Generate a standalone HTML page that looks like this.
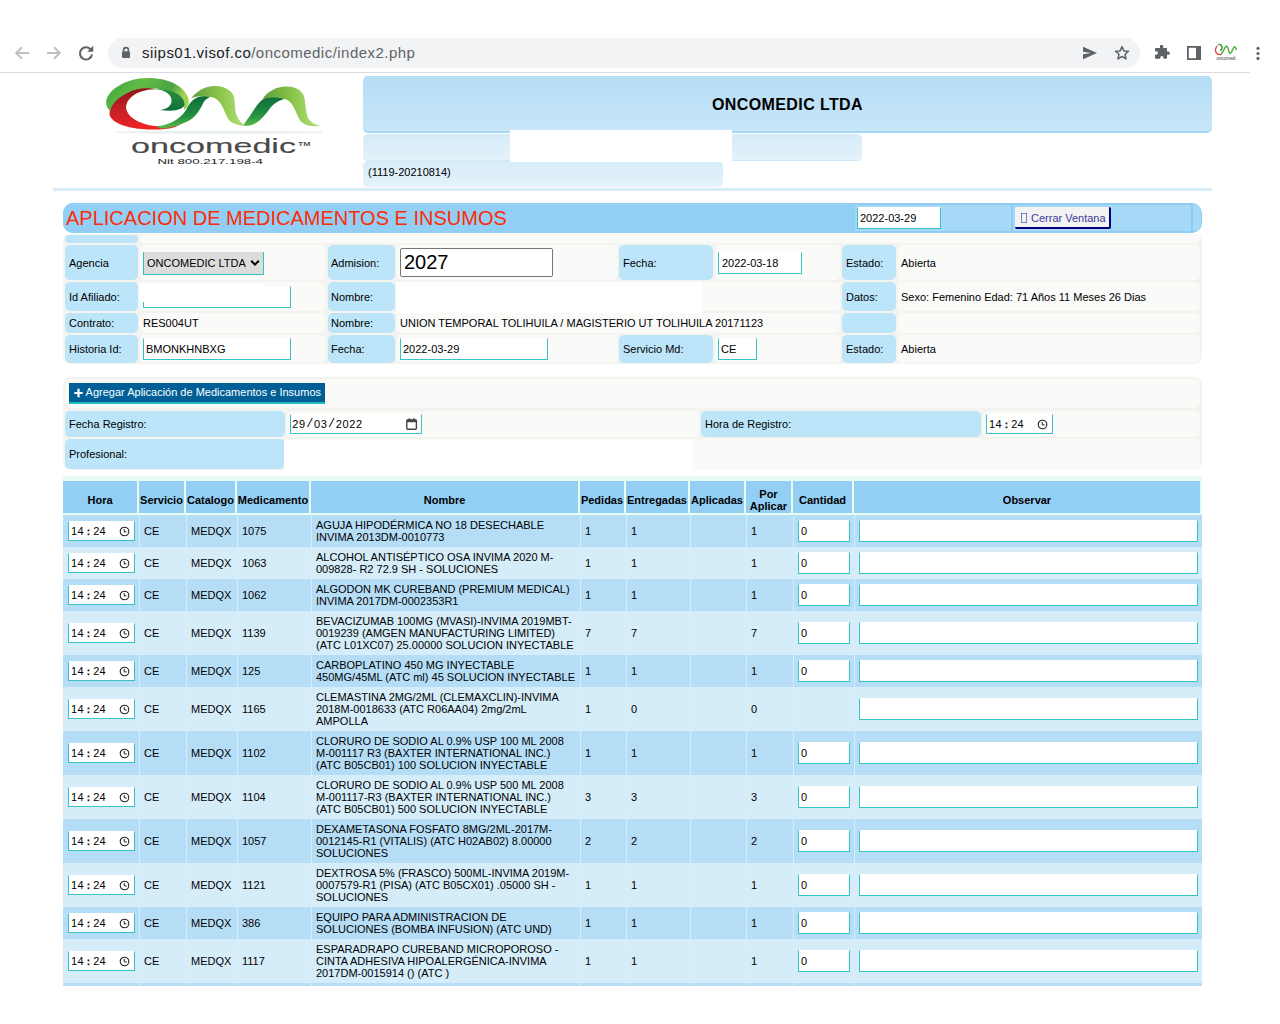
<!DOCTYPE html><html><head><meta charset="utf-8"><style>
html,body{margin:0;padding:0;background:#fff;width:1280px;height:1024px;overflow:hidden;}
body{position:relative;font-family:"Liberation Sans", sans-serif;font-size:11px;color:#000;}
.lbl{position:absolute;background:#bde5f9;border-radius:5px;}
.val{position:absolute;background:#fafaf8;border-radius:5px;}
.t11{position:absolute;font-size:11px;line-height:12px;white-space:nowrap;}
.inp{position:absolute;background:#fff;box-sizing:border-box;border:1px solid #35c3c3;border-top-color:#fff;}
.hc{position:absolute;background:#93cff5;font-weight:bold;font-size:11px;line-height:12px;display:flex;align-items:center;justify-content:center;text-align:center;box-sizing:border-box;padding-top:6px;}
.bc{position:absolute;font-size:11px;line-height:12px;display:flex;align-items:center;box-sizing:border-box;padding-left:4px;}
</style></head><body>
<div style="position:absolute;left:0px;top:72px;width:1250px;height:1px;background:#dadce0;"></div>
<div style="position:absolute;left:108px;top:38px;width:1032px;height:30px;background:#f1f3f4;border-radius:15px;"></div>
<svg style="position:absolute;left:13px;top:44px" width="18" height="18" viewBox="0 0 18 18"><path d="M16 9H3.5M9 3.2L3.2 9L9 14.8" fill="none" stroke="#bdc1c6" stroke-width="2"/></svg>
<svg style="position:absolute;left:45px;top:44px" width="18" height="18" viewBox="0 0 18 18"><path d="M2 9h12.5M9 3.2L14.8 9L9 14.8" fill="none" stroke="#bdc1c6" stroke-width="2"/></svg>
<svg style="position:absolute;left:77px;top:44px" width="18" height="18" viewBox="0 0 18 18"><path d="M14.2 6.2A6.1 6.1 0 1 0 15 10.5" fill="none" stroke="#5f6368" stroke-width="2"/><path d="M16.2 1.8V7.8H10.2Z" fill="#5f6368"/></svg>
<svg style="position:absolute;left:121px;top:46px" width="10" height="13" viewBox="0 0 10 13"><path d="M2.6 5.5V4A2.4 2.4 0 0 1 7.4 4V5.5" fill="none" stroke="#5f6368" stroke-width="1.6"/><rect x="1" y="5.3" width="8" height="6.6" rx="0.8" fill="#5f6368"/></svg>
<div style="position:absolute;left:142px;top:44px;white-space:nowrap;font-size:15px;line-height:18px;letter-spacing:0.47px;"><span style="color:#202124">siips01.visof.co</span><span style="color:#5f6368">/oncomedic/index2.php</span></div>
<svg style="position:absolute;left:1082px;top:46px" width="16" height="14" viewBox="0 0 16 14"><path d="M1 0.8L15 7L1 13.2L1 8.3L9 7L1 5.7Z" fill="#5f6368"/></svg>
<svg style="position:absolute;left:1114px;top:45px" width="16" height="16" viewBox="0 0 16 16"><path d="M8 1.6L9.9 5.9L14.5 6.3L11 9.3L12.1 13.9L8 11.5L3.9 13.9L5 9.3L1.5 6.3L6.1 5.9Z" fill="none" stroke="#5f6368" stroke-width="1.5" stroke-linejoin="round"/></svg>
<svg style="position:absolute;left:1154px;top:45px" width="16" height="16" viewBox="0 0 16 16"><path d="M6 1.2a1.6 1.6 0 0 1 3.2 0V3H12.5a.5 .5 0 0 1 .5.5V6.6h1.3a1.6 1.6 0 0 1 0 3.2H13V13a.8.8 0 0 1-.8.8H9.5V12.6a1.6 1.6 0 0 0-3.2 0v1.2H1.8A.8.8 0 0 1 1 13V9.7h1.2a1.7 1.7 0 0 0 0-3.4H1V3.5A.5.5 0 0 1 1.5 3H6Z" fill="#5f6368"/></svg>
<svg style="position:absolute;left:1187px;top:46px" width="14" height="14" viewBox="0 0 14 14"><rect x="0.9" y="0.9" width="12.2" height="12.2" fill="none" stroke="#5f6368" stroke-width="1.8"/><rect x="9" y="0.9" width="4.1" height="12.2" fill="#5f6368"/></svg>
<svg style="position:absolute;left:1214px;top:43px" width="24" height="19" viewBox="0 0 24 19"><path d="M3.5 2.8C1.5 4 1 8 2 9.5C3.5 11.5 6 11.8 7.5 11.3" fill="none" stroke="#e02828" stroke-width="1.3" opacity="0.9"/><path d="M4.2 1.6C6 1 8 2 8 4.5C8 6.5 7 7.3 6.2 7.3" fill="none" stroke="#2a9a35" stroke-width="1.4"/><path d="M7 11.2C9.5 10 10.5 3.5 12.5 3.2C14.5 3 14.5 10.5 16 10.5C18 10.5 19 4 20.5 3.8C21.5 3.8 22 5.5 22.5 7" fill="none" stroke="#4aa838" stroke-width="1.4"/><text x="12" y="17.3" font-size="4.6" text-anchor="middle" fill="#333" font-family="Liberation Sans" textLength="19" lengthAdjust="spacingAndGlyphs">oncomedi</text></svg>
<svg style="position:absolute;left:1255px;top:45px" width="6" height="16" viewBox="0 0 6 16"><circle cx="3" cy="3.3" r="1.6" fill="#5f6368"/><circle cx="3" cy="8.5" r="1.6" fill="#5f6368"/><circle cx="3" cy="13.4" r="1.6" fill="#5f6368"/></svg>
<svg style="position:absolute;left:100px;top:74px" width="230" height="95" viewBox="0 0 230 95">
<defs>
<linearGradient id="gred" x1="0" y1="0" x2="0.3" y2="1"><stop offset="0" stop-color="#7e1418"/><stop offset="0.5" stop-color="#c42026"/><stop offset="1" stop-color="#f02222"/></linearGradient>
<linearGradient id="gtop" x1="0" y1="0" x2="1" y2="0.3"><stop offset="0" stop-color="#3fa53c"/><stop offset="0.45" stop-color="#62bb46"/><stop offset="0.8" stop-color="#4aa443"/><stop offset="1" stop-color="#a2d152"/></linearGradient>
<linearGradient id="gcurl" x1="0" y1="0" x2="0" y2="1"><stop offset="0" stop-color="#2c9040"/><stop offset="1" stop-color="#0f6f3a"/></linearGradient>
<linearGradient id="gdark" x1="0" y1="0" x2="0" y2="1"><stop offset="0" stop-color="#0d6b38"/><stop offset="0.6" stop-color="#218f40"/><stop offset="1" stop-color="#5ab947"/></linearGradient>
<linearGradient id="glight" x1="0" y1="0" x2="1" y2="0"><stop offset="0" stop-color="#5e9f3c"/><stop offset="0.55" stop-color="#8cc84a"/><stop offset="1" stop-color="#bde08a"/></linearGradient>
<linearGradient id="gline" x1="0" y1="0" x2="1" y2="0"><stop offset="0" stop-color="#f4f4f4"/><stop offset="0.3" stop-color="#e6eef0"/><stop offset="0.7" stop-color="#e8eef0"/><stop offset="1" stop-color="#f4f4f4"/></linearGradient>
</defs>
<path d="M10,37 C6,47 26,56 55,55.5 C66,55.5 74,54 80,51 C72,52.5 66,53 60,52.5 C44,51.5 30,46 26.5,36 C24,26 36,15.5 55,15.2 C52,14 44,13.5 40,14 C24,17 12,26 10,37 Z" fill="url(#gred)"/>
<path d="M6.3,30 C5,17 25,4 48,4 C70,4 86,13 88.7,26 C89,31 87,34 84,36 C85,27 77,17 58,14.8 C50,14 42,13.6 36,15.5 C22,20 12,28 10,37 C8,35 6.5,32 6.3,30 Z" fill="url(#gtop)"/>
<path d="M52,15 C72,14 84,21 84.5,30 C84.5,35 76,38 60,36 C68,35 72,31 71.5,26 C71,20 65,15.5 52,15 Z" fill="url(#gcurl)"/>
<path d="M57,52.5 C68,51 80,46 86,36 C89,30 92,25 100,22.5 C104,21.5 108,22 110,23 C106,25 104,27 103,29.5 C100,36 96,42 90,46 C82,51 70,54 60,54.5 Z" fill="url(#gdark)"/>
<path d="M91,24.4 C96,18 104,12 115,12 C126,12 134,18 134.4,25 C135,31 135,38 137.5,43 C139.5,47.5 142,50 147.5,51.5 L144.4,51.9 C138,51.5 132,49.5 129,46 C126,42 124.5,36 121,30 C118,25.5 114,23 110,23 C103,22 97,22 91,24.4 Z" fill="url(#glight)"/>
<path d="M143.75,50.5 C148,45 153,37 158,30 C163,24 168,22 175,22.5 C179,22.8 182,23.5 184.4,25 C180,26 176,28 171,33 C166,40 161,46 156,49 C153,51 149,51.8 145,51.8 Z" fill="url(#gdark)"/>
<path d="M162.5,25 C167,18 176,12.5 186.25,12.5 C196,12.5 203,17 204.4,23.75 C205.5,29 205.5,37 208,43.75 C210,48 214,50.5 221.5,51.9 C214,52.8 208,52.2 204.4,50 C200,47.5 198.5,44 196,38 C193,31 190,26 184.4,25 C179,23 170,23 162.5,25 Z" fill="url(#glight)"/>
<rect x="15" y="57" width="207" height="2.5" fill="url(#gline)"/>
<text x="31" y="79.4" font-family="Liberation Sans" font-size="20.5" fill="#4a4a4a" stroke="#4a4a4a" stroke-width="0.15" textLength="165" lengthAdjust="spacingAndGlyphs">oncomedic</text>
<text x="198" y="71.8" font-family="Liberation Sans" font-size="5.5" font-weight="bold" fill="#555" textLength="12.5" lengthAdjust="spacingAndGlyphs">TM</text>
<text x="57.5" y="90" font-family="Liberation Sans" font-size="7.6" fill="#1a1a1a" textLength="105.5" lengthAdjust="spacingAndGlyphs">Nit 800.217.198-4</text>
</svg>
<div style="position:absolute;left:363px;top:76px;width:849px;height:57px;background:linear-gradient(#b5ddf6,#c8e6f8);border-radius:5px;border-bottom:2px solid #a9d6f4;box-sizing:border-box;"></div>
<div style="position:absolute;left:363px;top:96px;white-space:nowrap;font-size:16px;line-height:18px;font-weight:bold;letter-spacing:0.4px;"><span style="display:block;width:849px;text-align:center">ONCOMEDIC LTDA</span></div>
<div style="position:absolute;left:363px;top:134px;width:499px;height:27px;background:linear-gradient(#d5ebf8,#e4f2fa);border-radius:5px;border-bottom:1px solid #cfe8f7;box-sizing:border-box;"></div>
<div style="position:absolute;left:363px;top:161px;width:360px;height:26px;background:linear-gradient(#d6ecf8,#e5f2fa);border-radius:5px;"></div>
<div style="position:absolute;left:368px;top:166px;white-space:nowrap;font-size:11px;line-height:12px;">(1119-20210814)</div>
<div style="position:absolute;left:510px;top:130px;width:222px;height:32px;background:#fff;"></div>
<div style="position:absolute;left:53px;top:188px;width:1159px;height:3px;background:#d6ecf8;"></div>
<div style="position:absolute;left:63px;top:203px;width:1139px;height:30px;background:#8fccf4;border-radius:10px;"></div>
<div style="position:absolute;left:63px;top:203px;width:792px;height:30px;background:#93cff5;border-radius:10px 0 0 10px;"></div>
<div style="position:absolute;left:855px;top:205px;width:156px;height:26px;background:#a6d9f8;"></div>
<div style="position:absolute;left:1013px;top:205px;width:178px;height:26px;background:#a6d9f8;"></div>
<div style="position:absolute;left:1193px;top:205px;width:8px;height:26px;background:#a6d9f8;border-radius:0 6px 6px 0;"></div>
<div style="position:absolute;left:66px;top:207px;white-space:nowrap;font-size:20px;line-height:23px;color:#fd2c05;">APLICACION DE MEDICAMENTOS E INSUMOS</div>
<div style="position:absolute;left:857px;top:207px;width:84px;height:22px;background:#fff;box-sizing:border-box;border:1px solid #35c3c3;border-top-color:#fff;"></div>
<div style="position:absolute;left:860px;top:212px;white-space:nowrap;font-size:11px;line-height:12px;">2022-03-29</div>
<div style="position:absolute;left:1015px;top:207px;width:96px;height:22px;background:#f3f3f3;box-sizing:border-box;border-right:2px solid #00007a;border-bottom:2px solid #00007a;border-radius:2px;"></div>
<div style="position:absolute;left:1021px;top:212px;white-space:nowrap;font-size:11px;line-height:12px;color:#3b3b9a;"><span style="display:inline-block;width:4px;height:8px;border:1px solid #8080c0;margin-right:4px;vertical-align:-1px"></span>Cerrar Ventana</div>
<div style="position:absolute;left:63px;top:234px;width:1139px;height:130px;background:#f3f3ef;border-radius:8px;"></div>
<div style="position:absolute;left:65px;top:235px;width:73px;height:8px;background:#bde5f9;border-radius:4px;"></div>
<div style="position:absolute;left:140px;top:235px;width:1060px;height:8px;background:#fafaf8;border-radius:4px;"></div>
<div style="position:absolute;left:65px;top:245px;width:73px;height:35px;background:#bde5f9;border-radius:5px;"></div>
<div style="position:absolute;left:328px;top:245px;width:67px;height:35px;background:#bde5f9;border-radius:5px;"></div>
<div style="position:absolute;left:619px;top:245px;width:94px;height:35px;background:#bde5f9;border-radius:5px;"></div>
<div style="position:absolute;left:842px;top:245px;width:54px;height:35px;background:#bde5f9;border-radius:5px;"></div>
<div style="position:absolute;left:140px;top:245px;width:185px;height:35px;background:#fafaf8;border-radius:5px;"></div>
<div style="position:absolute;left:397px;top:245px;width:220px;height:35px;background:#fafaf8;border-radius:5px;"></div>
<div style="position:absolute;left:715px;top:245px;width:125px;height:35px;background:#fafaf8;border-radius:5px;"></div>
<div style="position:absolute;left:898px;top:245px;width:302px;height:35px;background:#fafaf8;border-radius:5px;"></div>
<div style="position:absolute;left:65px;top:282px;width:73px;height:29px;background:#bde5f9;border-radius:5px;"></div>
<div style="position:absolute;left:328px;top:282px;width:67px;height:29px;background:#bde5f9;border-radius:5px;"></div>
<div style="position:absolute;left:619px;top:282px;width:94px;height:29px;background:#bde5f9;border-radius:5px;"></div>
<div style="position:absolute;left:842px;top:282px;width:54px;height:29px;background:#bde5f9;border-radius:5px;"></div>
<div style="position:absolute;left:140px;top:282px;width:185px;height:29px;background:#fafaf8;border-radius:5px;"></div>
<div style="position:absolute;left:397px;top:282px;width:220px;height:29px;background:#fafaf8;border-radius:5px;"></div>
<div style="position:absolute;left:715px;top:282px;width:125px;height:29px;background:#fafaf8;border-radius:5px;"></div>
<div style="position:absolute;left:898px;top:282px;width:302px;height:29px;background:#fafaf8;border-radius:5px;"></div>
<div style="position:absolute;left:65px;top:313px;width:73px;height:20px;background:#bde5f9;border-radius:5px;"></div>
<div style="position:absolute;left:328px;top:313px;width:67px;height:20px;background:#bde5f9;border-radius:5px;"></div>
<div style="position:absolute;left:619px;top:313px;width:94px;height:20px;background:#bde5f9;border-radius:5px;"></div>
<div style="position:absolute;left:842px;top:313px;width:54px;height:20px;background:#bde5f9;border-radius:5px;"></div>
<div style="position:absolute;left:140px;top:313px;width:185px;height:20px;background:#fafaf8;border-radius:5px;"></div>
<div style="position:absolute;left:397px;top:313px;width:220px;height:20px;background:#fafaf8;border-radius:5px;"></div>
<div style="position:absolute;left:715px;top:313px;width:125px;height:20px;background:#fafaf8;border-radius:5px;"></div>
<div style="position:absolute;left:898px;top:313px;width:302px;height:20px;background:#fafaf8;border-radius:5px;"></div>
<div style="position:absolute;left:65px;top:335px;width:73px;height:28px;background:#bde5f9;border-radius:5px;"></div>
<div style="position:absolute;left:328px;top:335px;width:67px;height:28px;background:#bde5f9;border-radius:5px;"></div>
<div style="position:absolute;left:619px;top:335px;width:94px;height:28px;background:#bde5f9;border-radius:5px;"></div>
<div style="position:absolute;left:842px;top:335px;width:54px;height:28px;background:#bde5f9;border-radius:5px;"></div>
<div style="position:absolute;left:140px;top:335px;width:185px;height:28px;background:#fafaf8;border-radius:5px;"></div>
<div style="position:absolute;left:397px;top:335px;width:220px;height:28px;background:#fafaf8;border-radius:5px;"></div>
<div style="position:absolute;left:715px;top:335px;width:125px;height:28px;background:#fafaf8;border-radius:5px;"></div>
<div style="position:absolute;left:898px;top:335px;width:302px;height:28px;background:#fafaf8;border-radius:5px;"></div>
<div style="position:absolute;left:397px;top:282px;width:443px;height:29px;background:#fafaf8;border-radius:5px;"></div>
<div style="position:absolute;left:397px;top:313px;width:443px;height:20px;background:#fafaf8;border-radius:5px;"></div>
<div style="position:absolute;left:69px;top:257px;white-space:nowrap;font-size:11px;line-height:12px;">Agencia</div>
<div style="position:absolute;left:331px;top:257px;white-space:nowrap;font-size:11px;line-height:12px;">Admision:</div>
<div style="position:absolute;left:623px;top:257px;white-space:nowrap;font-size:11px;line-height:12px;">Fecha:</div>
<div style="position:absolute;left:846px;top:257px;white-space:nowrap;font-size:11px;line-height:12px;">Estado:</div>
<div style="position:absolute;left:69px;top:291px;white-space:nowrap;font-size:11px;line-height:12px;">Id Afiliado:</div>
<div style="position:absolute;left:331px;top:291px;white-space:nowrap;font-size:11px;line-height:12px;">Nombre:</div>
<div style="position:absolute;left:846px;top:291px;white-space:nowrap;font-size:11px;line-height:12px;">Datos:</div>
<div style="position:absolute;left:69px;top:317px;white-space:nowrap;font-size:11px;line-height:12px;">Contrato:</div>
<div style="position:absolute;left:331px;top:317px;white-space:nowrap;font-size:11px;line-height:12px;">Nombre:</div>
<div style="position:absolute;left:69px;top:343px;white-space:nowrap;font-size:11px;line-height:12px;">Historia Id:</div>
<div style="position:absolute;left:331px;top:343px;white-space:nowrap;font-size:11px;line-height:12px;">Fecha:</div>
<div style="position:absolute;left:623px;top:343px;white-space:nowrap;font-size:11px;line-height:12px;">Servicio Md:</div>
<div style="position:absolute;left:846px;top:343px;white-space:nowrap;font-size:11px;line-height:12px;">Estado:</div>
<div style="position:absolute;left:143px;top:252px;width:121px;height:23px;background:#dcdcdc;box-sizing:border-box;border:1px solid #35c3c3;border-top:none;"></div>
<div style="position:absolute;left:147px;top:257px;white-space:nowrap;font-size:11px;line-height:12px;">ONCOMEDIC LTDA</div>
<svg style="position:absolute;left:250px;top:259px" width="10" height="8" viewBox="0 0 10 8"><path d="M1.2 1.8L5 5.6L8.8 1.8" fill="none" stroke="#000" stroke-width="2"/></svg>
<div style="position:absolute;left:400px;top:248px;width:153px;height:29px;background:#fff;box-sizing:border-box;border:1px solid #767676;border-radius:2px;"></div>
<div style="position:absolute;left:404px;top:251px;white-space:nowrap;font-size:20px;line-height:23px;">2027</div>
<div style="position:absolute;left:718px;top:252px;width:84px;height:22px;background:#fff;box-sizing:border-box;border:1px solid #35c3c3;border-top-color:#fff;"></div>
<div style="position:absolute;left:722px;top:257px;white-space:nowrap;font-size:11px;line-height:12px;">2022-03-18</div>
<div style="position:absolute;left:901px;top:257px;white-space:nowrap;font-size:11px;line-height:12px;">Abierta</div>
<div style="position:absolute;left:143px;top:286px;width:148px;height:22px;background:#fff;box-sizing:border-box;border:1px solid #35c3c3;border-top-color:#fff;"></div>
<div style="position:absolute;left:139px;top:283px;width:123px;height:19px;background:#fff;"></div>
<div style="position:absolute;left:901px;top:291px;white-space:nowrap;font-size:11px;line-height:12px;">Sexo: Femenino Edad: 71 Años 11 Meses 26 Dias</div>
<div style="position:absolute;left:143px;top:317px;white-space:nowrap;font-size:11px;line-height:12px;">RES004UT</div>
<div style="position:absolute;left:400px;top:317px;white-space:nowrap;font-size:11px;line-height:12px;">UNION TEMPORAL TOLIHUILA / MAGISTERIO UT TOLIHUILA 20171123</div>
<div style="position:absolute;left:143px;top:338px;width:148px;height:22px;background:#fff;box-sizing:border-box;border:1px solid #35c3c3;border-top-color:#fff;"></div>
<div style="position:absolute;left:146px;top:343px;white-space:nowrap;font-size:11px;line-height:12px;">BMONKHNBXG</div>
<div style="position:absolute;left:400px;top:338px;width:148px;height:22px;background:#fff;box-sizing:border-box;border:1px solid #35c3c3;border-top-color:#fff;"></div>
<div style="position:absolute;left:403px;top:343px;white-space:nowrap;font-size:11px;line-height:12px;">2022-03-29</div>
<div style="position:absolute;left:718px;top:338px;width:39px;height:22px;background:#fff;box-sizing:border-box;border:1px solid #35c3c3;border-top-color:#fff;"></div>
<div style="position:absolute;left:721px;top:343px;white-space:nowrap;font-size:11px;line-height:12px;">CE</div>
<div style="position:absolute;left:901px;top:343px;white-space:nowrap;font-size:11px;line-height:12px;">Abierta</div>
<div style="position:absolute;left:396px;top:282px;width:306px;height:31px;background:#fff;"></div>
<div style="position:absolute;left:63px;top:377px;width:1139px;height:93px;background:#f3f3ef;border-radius:8px;"></div>
<div style="position:absolute;left:65px;top:379px;width:1135px;height:29px;background:#fafaf8;border-radius:8px;"></div>
<div style="position:absolute;left:69px;top:383px;width:256px;height:21px;background:#005f96;box-sizing:border-box;border-bottom:2px solid #22bcbc;"></div>
<svg style="position:absolute;left:73.5px;top:388px" width="9" height="10" viewBox="0 0 9 10"><path d="M4.5 0.8V9.2M0.3 5H8.7" stroke="#fff" stroke-width="2.2"/></svg>
<div style="position:absolute;left:85.6px;top:386px;white-space:nowrap;font-size:11px;line-height:12px;color:#fff;">Agregar Aplicación de Medicamentos e Insumos</div>
<div style="position:absolute;left:65px;top:411px;width:220px;height:26px;background:#bde5f9;border-radius:5px;"></div>
<div style="position:absolute;left:287px;top:411px;width:412px;height:26px;background:#fafaf8;border-radius:5px;"></div>
<div style="position:absolute;left:701px;top:411px;width:280px;height:26px;background:#bde5f9;border-radius:5px;"></div>
<div style="position:absolute;left:983px;top:411px;width:217px;height:26px;background:#fafaf8;border-radius:5px;"></div>
<div style="position:absolute;left:65px;top:439px;width:220px;height:30px;background:#bde5f9;border-radius:5px;"></div>
<div style="position:absolute;left:287px;top:439px;width:913px;height:31px;background:#fafaf8;border-radius:5px;"></div>
<div style="position:absolute;left:69px;top:418px;white-space:nowrap;font-size:11px;line-height:12px;">Fecha Registro:</div>
<div style="position:absolute;left:69px;top:448px;white-space:nowrap;font-size:11px;line-height:12px;">Profesional:</div>
<div style="position:absolute;left:705px;top:418px;white-space:nowrap;font-size:11px;line-height:12px;">Hora de Registro:</div>
<div style="position:absolute;left:290px;top:414px;width:132px;height:20px;background:#fff;box-sizing:border-box;border:1px solid #35c3c3;border-top-color:#fff;"></div>
<div style="position:absolute;left:292.2px;top:418px;white-space:nowrap;font-size:11px;line-height:12px;letter-spacing:0.6px;">29</div>
<div style="position:absolute;left:314.0px;top:418px;white-space:nowrap;font-size:11px;line-height:12px;letter-spacing:0.6px;">03</div>
<div style="position:absolute;left:335.8px;top:418px;white-space:nowrap;font-size:11px;line-height:12px;letter-spacing:0.6px;">2022</div>
<div style="position:absolute;left:306.2px;top:418px;white-space:nowrap;font-family:'Liberation Mono', monospace;font-size:12px;line-height:12px;">/</div>
<div style="position:absolute;left:328.0px;top:418px;white-space:nowrap;font-family:'Liberation Mono', monospace;font-size:12px;line-height:12px;">/</div>
<svg style="position:absolute;left:405px;top:417px" width="13" height="14" viewBox="0 0 13 14"><rect x="1.8" y="3" width="9.6" height="9.2" rx="1" fill="none" stroke="#444" stroke-width="1.4"/><rect x="1.8" y="2.6" width="9.6" height="2.6" fill="#444"/><rect x="3.6" y="1.2" width="1.4" height="2" fill="#444"/><rect x="8.2" y="1.2" width="1.4" height="2" fill="#444"/></svg>
<div style="position:absolute;left:986px;top:414px;width:67px;height:20px;background:#fff;box-sizing:border-box;border:1px solid #35c3c3;border-top-color:#fff;"></div>
<div style="position:absolute;left:284px;top:440px;width:408px;height:31px;background:#fff;"></div>
<div style="position:absolute;left:986px;top:414px;width:67px;height:20px;background:#fff;box-sizing:border-box;border:1px solid #35c3c3;border-top-color:#fff;"></div>
<div style="position:absolute;left:989.0px;top:418px;white-space:nowrap;font-size:11px;line-height:12px;">1</div>
<div style="position:absolute;left:995.6px;top:418px;white-space:nowrap;font-size:11px;line-height:12px;">4</div>
<div style="position:absolute;left:1011.3px;top:418px;white-space:nowrap;font-size:11px;line-height:12px;">2</div>
<div style="position:absolute;left:1017.5px;top:418px;white-space:nowrap;font-size:11px;line-height:12px;">4</div>
<svg style="position:absolute;left:1005px;top:422px" width="3" height="8" viewBox="0 0 3 8"><rect x="0.6" y="0.5" width="1.8" height="1.8" fill="#222"/><rect x="0.6" y="4.4" width="1.8" height="1.8" fill="#222"/></svg>
<svg style="position:absolute;left:1037px;top:419px" width="11" height="11" viewBox="0 0 11 11"><circle cx="5.5" cy="5.5" r="4.3" fill="none" stroke="#222" stroke-width="1.1"/><path d="M5.2 3V5.9H7.6" fill="none" stroke="#222" stroke-width="1"/></svg>
<div style="position:absolute;left:63px;top:476px;width:1139px;height:510px;background:#e6fcf1;"></div>
<div class="hc" style="left:63px;top:481px;width:74px;height:32px;">Hora</div>
<div class="hc" style="left:139px;top:481px;width:45px;height:32px;">Servicio</div>
<div class="hc" style="left:186px;top:481px;width:49px;height:32px;">Catalogo</div>
<div class="hc" style="left:237px;top:481px;width:72px;height:32px;">Medicamento</div>
<div class="hc" style="left:311px;top:481px;width:267px;height:32px;">Nombre</div>
<div class="hc" style="left:580px;top:481px;width:44px;height:32px;">Pedidas</div>
<div class="hc" style="left:626px;top:481px;width:62px;height:32px;">Entregadas</div>
<div class="hc" style="left:690px;top:481px;width:54px;height:32px;">Aplicadas</div>
<div class="hc" style="left:746px;top:481px;width:45px;height:32px;">Por<br>Aplicar</div>
<div class="hc" style="left:793px;top:481px;width:59px;height:32px;">Cantidad</div>
<div class="hc" style="left:854px;top:481px;width:346px;height:32px;">Observar</div>
<div style="position:absolute;left:63px;top:515px;width:1139px;height:32px;background:#b6ddf6;"></div>
<div style="position:absolute;left:139px;top:515px;width:1px;height:32px;background:#d7eefa;"></div>
<div style="position:absolute;left:186px;top:515px;width:1px;height:32px;background:#d7eefa;"></div>
<div style="position:absolute;left:237px;top:515px;width:1px;height:32px;background:#d7eefa;"></div>
<div style="position:absolute;left:311px;top:515px;width:1px;height:32px;background:#d7eefa;"></div>
<div style="position:absolute;left:580px;top:515px;width:1px;height:32px;background:#d7eefa;"></div>
<div style="position:absolute;left:626px;top:515px;width:1px;height:32px;background:#d7eefa;"></div>
<div style="position:absolute;left:690px;top:515px;width:1px;height:32px;background:#d7eefa;"></div>
<div style="position:absolute;left:746px;top:515px;width:1px;height:32px;background:#d7eefa;"></div>
<div style="position:absolute;left:793px;top:515px;width:1px;height:32px;background:#d7eefa;"></div>
<div style="position:absolute;left:854px;top:515px;width:1px;height:32px;background:#d7eefa;"></div>
<div class="bc" style="left:140px;top:515px;width:46px;height:32px;">CE</div>
<div class="bc" style="left:187px;top:515px;width:50px;height:32px;">MEDQX</div>
<div class="bc" style="left:238px;top:515px;width:73px;height:32px;">1075</div>
<div class="bc" style="left:312px;top:515px;width:268px;height:32px;">AGUJA HIPODÉRMICA NO 18 DESECHABLE<br>INVIMA 2013DM-0010773</div>
<div class="bc" style="left:581px;top:515px;width:45px;height:32px;">1</div>
<div class="bc" style="left:627px;top:515px;width:63px;height:32px;">1</div>
<div class="bc" style="left:747px;top:515px;width:46px;height:32px;">1</div>
<div style="position:absolute;left:68px;top:521px;width:67px;height:20px;background:#fff;box-sizing:border-box;border:1px solid #35c3c3;border-top-color:#fff;"></div>
<div style="position:absolute;left:71.0px;top:525px;white-space:nowrap;font-size:11px;line-height:12px;">1</div>
<div style="position:absolute;left:77.6px;top:525px;white-space:nowrap;font-size:11px;line-height:12px;">4</div>
<div style="position:absolute;left:93.3px;top:525px;white-space:nowrap;font-size:11px;line-height:12px;">2</div>
<div style="position:absolute;left:99.5px;top:525px;white-space:nowrap;font-size:11px;line-height:12px;">4</div>
<svg style="position:absolute;left:87px;top:529px" width="3" height="8" viewBox="0 0 3 8"><rect x="0.6" y="0.5" width="1.8" height="1.8" fill="#222"/><rect x="0.6" y="4.4" width="1.8" height="1.8" fill="#222"/></svg>
<svg style="position:absolute;left:119px;top:526px" width="11" height="11" viewBox="0 0 11 11"><circle cx="5.5" cy="5.5" r="4.3" fill="none" stroke="#222" stroke-width="1.1"/><path d="M5.2 3V5.9H7.6" fill="none" stroke="#222" stroke-width="1"/></svg>
<div style="position:absolute;left:798px;top:520px;width:52px;height:22px;background:#fff;box-sizing:border-box;border:1px solid #35c3c3;border-top-color:#fff;"></div>
<div style="position:absolute;left:801px;top:525px;white-space:nowrap;font-size:11px;line-height:12px;">0</div>
<div style="position:absolute;left:859px;top:520px;width:339px;height:22px;background:#fff;box-sizing:border-box;border:1px solid #35c3c3;border-top-color:#fff;"></div>
<div style="position:absolute;left:63px;top:547px;width:1139px;height:32px;background:#d5ecf9;"></div>
<div style="position:absolute;left:139px;top:547px;width:1px;height:32px;background:#d7eefa;"></div>
<div style="position:absolute;left:186px;top:547px;width:1px;height:32px;background:#d7eefa;"></div>
<div style="position:absolute;left:237px;top:547px;width:1px;height:32px;background:#d7eefa;"></div>
<div style="position:absolute;left:311px;top:547px;width:1px;height:32px;background:#d7eefa;"></div>
<div style="position:absolute;left:580px;top:547px;width:1px;height:32px;background:#d7eefa;"></div>
<div style="position:absolute;left:626px;top:547px;width:1px;height:32px;background:#d7eefa;"></div>
<div style="position:absolute;left:690px;top:547px;width:1px;height:32px;background:#d7eefa;"></div>
<div style="position:absolute;left:746px;top:547px;width:1px;height:32px;background:#d7eefa;"></div>
<div style="position:absolute;left:793px;top:547px;width:1px;height:32px;background:#d7eefa;"></div>
<div style="position:absolute;left:854px;top:547px;width:1px;height:32px;background:#d7eefa;"></div>
<div class="bc" style="left:140px;top:547px;width:46px;height:32px;">CE</div>
<div class="bc" style="left:187px;top:547px;width:50px;height:32px;">MEDQX</div>
<div class="bc" style="left:238px;top:547px;width:73px;height:32px;">1063</div>
<div class="bc" style="left:312px;top:547px;width:268px;height:32px;">ALCOHOL ANTISÉPTICO OSA INVIMA 2020 M-<br>009828- R2 72.9 SH - SOLUCIONES</div>
<div class="bc" style="left:581px;top:547px;width:45px;height:32px;">1</div>
<div class="bc" style="left:627px;top:547px;width:63px;height:32px;">1</div>
<div class="bc" style="left:747px;top:547px;width:46px;height:32px;">1</div>
<div style="position:absolute;left:68px;top:553px;width:67px;height:20px;background:#fff;box-sizing:border-box;border:1px solid #35c3c3;border-top-color:#fff;"></div>
<div style="position:absolute;left:71.0px;top:557px;white-space:nowrap;font-size:11px;line-height:12px;">1</div>
<div style="position:absolute;left:77.6px;top:557px;white-space:nowrap;font-size:11px;line-height:12px;">4</div>
<div style="position:absolute;left:93.3px;top:557px;white-space:nowrap;font-size:11px;line-height:12px;">2</div>
<div style="position:absolute;left:99.5px;top:557px;white-space:nowrap;font-size:11px;line-height:12px;">4</div>
<svg style="position:absolute;left:87px;top:561px" width="3" height="8" viewBox="0 0 3 8"><rect x="0.6" y="0.5" width="1.8" height="1.8" fill="#222"/><rect x="0.6" y="4.4" width="1.8" height="1.8" fill="#222"/></svg>
<svg style="position:absolute;left:119px;top:558px" width="11" height="11" viewBox="0 0 11 11"><circle cx="5.5" cy="5.5" r="4.3" fill="none" stroke="#222" stroke-width="1.1"/><path d="M5.2 3V5.9H7.6" fill="none" stroke="#222" stroke-width="1"/></svg>
<div style="position:absolute;left:798px;top:552px;width:52px;height:22px;background:#fff;box-sizing:border-box;border:1px solid #35c3c3;border-top-color:#fff;"></div>
<div style="position:absolute;left:801px;top:557px;white-space:nowrap;font-size:11px;line-height:12px;">0</div>
<div style="position:absolute;left:859px;top:552px;width:339px;height:22px;background:#fff;box-sizing:border-box;border:1px solid #35c3c3;border-top-color:#fff;"></div>
<div style="position:absolute;left:63px;top:579px;width:1139px;height:32px;background:#b6ddf6;"></div>
<div style="position:absolute;left:139px;top:579px;width:1px;height:32px;background:#d7eefa;"></div>
<div style="position:absolute;left:186px;top:579px;width:1px;height:32px;background:#d7eefa;"></div>
<div style="position:absolute;left:237px;top:579px;width:1px;height:32px;background:#d7eefa;"></div>
<div style="position:absolute;left:311px;top:579px;width:1px;height:32px;background:#d7eefa;"></div>
<div style="position:absolute;left:580px;top:579px;width:1px;height:32px;background:#d7eefa;"></div>
<div style="position:absolute;left:626px;top:579px;width:1px;height:32px;background:#d7eefa;"></div>
<div style="position:absolute;left:690px;top:579px;width:1px;height:32px;background:#d7eefa;"></div>
<div style="position:absolute;left:746px;top:579px;width:1px;height:32px;background:#d7eefa;"></div>
<div style="position:absolute;left:793px;top:579px;width:1px;height:32px;background:#d7eefa;"></div>
<div style="position:absolute;left:854px;top:579px;width:1px;height:32px;background:#d7eefa;"></div>
<div class="bc" style="left:140px;top:579px;width:46px;height:32px;">CE</div>
<div class="bc" style="left:187px;top:579px;width:50px;height:32px;">MEDQX</div>
<div class="bc" style="left:238px;top:579px;width:73px;height:32px;">1062</div>
<div class="bc" style="left:312px;top:579px;width:268px;height:32px;">ALGODON MK CUREBAND (PREMIUM MEDICAL)<br>INVIMA 2017DM-0002353R1</div>
<div class="bc" style="left:581px;top:579px;width:45px;height:32px;">1</div>
<div class="bc" style="left:627px;top:579px;width:63px;height:32px;">1</div>
<div class="bc" style="left:747px;top:579px;width:46px;height:32px;">1</div>
<div style="position:absolute;left:68px;top:585px;width:67px;height:20px;background:#fff;box-sizing:border-box;border:1px solid #35c3c3;border-top-color:#fff;"></div>
<div style="position:absolute;left:71.0px;top:589px;white-space:nowrap;font-size:11px;line-height:12px;">1</div>
<div style="position:absolute;left:77.6px;top:589px;white-space:nowrap;font-size:11px;line-height:12px;">4</div>
<div style="position:absolute;left:93.3px;top:589px;white-space:nowrap;font-size:11px;line-height:12px;">2</div>
<div style="position:absolute;left:99.5px;top:589px;white-space:nowrap;font-size:11px;line-height:12px;">4</div>
<svg style="position:absolute;left:87px;top:593px" width="3" height="8" viewBox="0 0 3 8"><rect x="0.6" y="0.5" width="1.8" height="1.8" fill="#222"/><rect x="0.6" y="4.4" width="1.8" height="1.8" fill="#222"/></svg>
<svg style="position:absolute;left:119px;top:590px" width="11" height="11" viewBox="0 0 11 11"><circle cx="5.5" cy="5.5" r="4.3" fill="none" stroke="#222" stroke-width="1.1"/><path d="M5.2 3V5.9H7.6" fill="none" stroke="#222" stroke-width="1"/></svg>
<div style="position:absolute;left:798px;top:584px;width:52px;height:22px;background:#fff;box-sizing:border-box;border:1px solid #35c3c3;border-top-color:#fff;"></div>
<div style="position:absolute;left:801px;top:589px;white-space:nowrap;font-size:11px;line-height:12px;">0</div>
<div style="position:absolute;left:859px;top:584px;width:339px;height:22px;background:#fff;box-sizing:border-box;border:1px solid #35c3c3;border-top-color:#fff;"></div>
<div style="position:absolute;left:63px;top:611px;width:1139px;height:44px;background:#d5ecf9;"></div>
<div style="position:absolute;left:139px;top:611px;width:1px;height:44px;background:#d7eefa;"></div>
<div style="position:absolute;left:186px;top:611px;width:1px;height:44px;background:#d7eefa;"></div>
<div style="position:absolute;left:237px;top:611px;width:1px;height:44px;background:#d7eefa;"></div>
<div style="position:absolute;left:311px;top:611px;width:1px;height:44px;background:#d7eefa;"></div>
<div style="position:absolute;left:580px;top:611px;width:1px;height:44px;background:#d7eefa;"></div>
<div style="position:absolute;left:626px;top:611px;width:1px;height:44px;background:#d7eefa;"></div>
<div style="position:absolute;left:690px;top:611px;width:1px;height:44px;background:#d7eefa;"></div>
<div style="position:absolute;left:746px;top:611px;width:1px;height:44px;background:#d7eefa;"></div>
<div style="position:absolute;left:793px;top:611px;width:1px;height:44px;background:#d7eefa;"></div>
<div style="position:absolute;left:854px;top:611px;width:1px;height:44px;background:#d7eefa;"></div>
<div class="bc" style="left:140px;top:611px;width:46px;height:44px;">CE</div>
<div class="bc" style="left:187px;top:611px;width:50px;height:44px;">MEDQX</div>
<div class="bc" style="left:238px;top:611px;width:73px;height:44px;">1139</div>
<div class="bc" style="left:312px;top:611px;width:268px;height:44px;">BEVACIZUMAB 100MG (MVASI)-INVIMA 2019MBT-<br>0019239 (AMGEN MANUFACTURING LIMITED)<br>(ATC L01XC07) 25.00000 SOLUCION INYECTABLE</div>
<div class="bc" style="left:581px;top:611px;width:45px;height:44px;">7</div>
<div class="bc" style="left:627px;top:611px;width:63px;height:44px;">7</div>
<div class="bc" style="left:747px;top:611px;width:46px;height:44px;">7</div>
<div style="position:absolute;left:68px;top:623px;width:67px;height:20px;background:#fff;box-sizing:border-box;border:1px solid #35c3c3;border-top-color:#fff;"></div>
<div style="position:absolute;left:71.0px;top:627px;white-space:nowrap;font-size:11px;line-height:12px;">1</div>
<div style="position:absolute;left:77.6px;top:627px;white-space:nowrap;font-size:11px;line-height:12px;">4</div>
<div style="position:absolute;left:93.3px;top:627px;white-space:nowrap;font-size:11px;line-height:12px;">2</div>
<div style="position:absolute;left:99.5px;top:627px;white-space:nowrap;font-size:11px;line-height:12px;">4</div>
<svg style="position:absolute;left:87px;top:631px" width="3" height="8" viewBox="0 0 3 8"><rect x="0.6" y="0.5" width="1.8" height="1.8" fill="#222"/><rect x="0.6" y="4.4" width="1.8" height="1.8" fill="#222"/></svg>
<svg style="position:absolute;left:119px;top:628px" width="11" height="11" viewBox="0 0 11 11"><circle cx="5.5" cy="5.5" r="4.3" fill="none" stroke="#222" stroke-width="1.1"/><path d="M5.2 3V5.9H7.6" fill="none" stroke="#222" stroke-width="1"/></svg>
<div style="position:absolute;left:798px;top:622px;width:52px;height:22px;background:#fff;box-sizing:border-box;border:1px solid #35c3c3;border-top-color:#fff;"></div>
<div style="position:absolute;left:801px;top:627px;white-space:nowrap;font-size:11px;line-height:12px;">0</div>
<div style="position:absolute;left:859px;top:622px;width:339px;height:22px;background:#fff;box-sizing:border-box;border:1px solid #35c3c3;border-top-color:#fff;"></div>
<div style="position:absolute;left:63px;top:655px;width:1139px;height:32px;background:#b6ddf6;"></div>
<div style="position:absolute;left:139px;top:655px;width:1px;height:32px;background:#d7eefa;"></div>
<div style="position:absolute;left:186px;top:655px;width:1px;height:32px;background:#d7eefa;"></div>
<div style="position:absolute;left:237px;top:655px;width:1px;height:32px;background:#d7eefa;"></div>
<div style="position:absolute;left:311px;top:655px;width:1px;height:32px;background:#d7eefa;"></div>
<div style="position:absolute;left:580px;top:655px;width:1px;height:32px;background:#d7eefa;"></div>
<div style="position:absolute;left:626px;top:655px;width:1px;height:32px;background:#d7eefa;"></div>
<div style="position:absolute;left:690px;top:655px;width:1px;height:32px;background:#d7eefa;"></div>
<div style="position:absolute;left:746px;top:655px;width:1px;height:32px;background:#d7eefa;"></div>
<div style="position:absolute;left:793px;top:655px;width:1px;height:32px;background:#d7eefa;"></div>
<div style="position:absolute;left:854px;top:655px;width:1px;height:32px;background:#d7eefa;"></div>
<div class="bc" style="left:140px;top:655px;width:46px;height:32px;">CE</div>
<div class="bc" style="left:187px;top:655px;width:50px;height:32px;">MEDQX</div>
<div class="bc" style="left:238px;top:655px;width:73px;height:32px;">125</div>
<div class="bc" style="left:312px;top:655px;width:268px;height:32px;">CARBOPLATINO 450 MG INYECTABLE<br>450MG/45ML (ATC ml) 45 SOLUCION INYECTABLE</div>
<div class="bc" style="left:581px;top:655px;width:45px;height:32px;">1</div>
<div class="bc" style="left:627px;top:655px;width:63px;height:32px;">1</div>
<div class="bc" style="left:747px;top:655px;width:46px;height:32px;">1</div>
<div style="position:absolute;left:68px;top:661px;width:67px;height:20px;background:#fff;box-sizing:border-box;border:1px solid #35c3c3;border-top-color:#fff;"></div>
<div style="position:absolute;left:71.0px;top:665px;white-space:nowrap;font-size:11px;line-height:12px;">1</div>
<div style="position:absolute;left:77.6px;top:665px;white-space:nowrap;font-size:11px;line-height:12px;">4</div>
<div style="position:absolute;left:93.3px;top:665px;white-space:nowrap;font-size:11px;line-height:12px;">2</div>
<div style="position:absolute;left:99.5px;top:665px;white-space:nowrap;font-size:11px;line-height:12px;">4</div>
<svg style="position:absolute;left:87px;top:669px" width="3" height="8" viewBox="0 0 3 8"><rect x="0.6" y="0.5" width="1.8" height="1.8" fill="#222"/><rect x="0.6" y="4.4" width="1.8" height="1.8" fill="#222"/></svg>
<svg style="position:absolute;left:119px;top:666px" width="11" height="11" viewBox="0 0 11 11"><circle cx="5.5" cy="5.5" r="4.3" fill="none" stroke="#222" stroke-width="1.1"/><path d="M5.2 3V5.9H7.6" fill="none" stroke="#222" stroke-width="1"/></svg>
<div style="position:absolute;left:798px;top:660px;width:52px;height:22px;background:#fff;box-sizing:border-box;border:1px solid #35c3c3;border-top-color:#fff;"></div>
<div style="position:absolute;left:801px;top:665px;white-space:nowrap;font-size:11px;line-height:12px;">0</div>
<div style="position:absolute;left:859px;top:660px;width:339px;height:22px;background:#fff;box-sizing:border-box;border:1px solid #35c3c3;border-top-color:#fff;"></div>
<div style="position:absolute;left:63px;top:687px;width:1139px;height:44px;background:#d5ecf9;"></div>
<div style="position:absolute;left:139px;top:687px;width:1px;height:44px;background:#d7eefa;"></div>
<div style="position:absolute;left:186px;top:687px;width:1px;height:44px;background:#d7eefa;"></div>
<div style="position:absolute;left:237px;top:687px;width:1px;height:44px;background:#d7eefa;"></div>
<div style="position:absolute;left:311px;top:687px;width:1px;height:44px;background:#d7eefa;"></div>
<div style="position:absolute;left:580px;top:687px;width:1px;height:44px;background:#d7eefa;"></div>
<div style="position:absolute;left:626px;top:687px;width:1px;height:44px;background:#d7eefa;"></div>
<div style="position:absolute;left:690px;top:687px;width:1px;height:44px;background:#d7eefa;"></div>
<div style="position:absolute;left:746px;top:687px;width:1px;height:44px;background:#d7eefa;"></div>
<div style="position:absolute;left:793px;top:687px;width:1px;height:44px;background:#d7eefa;"></div>
<div style="position:absolute;left:854px;top:687px;width:1px;height:44px;background:#d7eefa;"></div>
<div class="bc" style="left:140px;top:687px;width:46px;height:44px;">CE</div>
<div class="bc" style="left:187px;top:687px;width:50px;height:44px;">MEDQX</div>
<div class="bc" style="left:238px;top:687px;width:73px;height:44px;">1165</div>
<div class="bc" style="left:312px;top:687px;width:268px;height:44px;">CLEMASTINA 2MG/2ML (CLEMAXCLIN)-INVIMA<br>2018M-0018633 (ATC R06AA04) 2mg/2mL<br>AMPOLLA</div>
<div class="bc" style="left:581px;top:687px;width:45px;height:44px;">1</div>
<div class="bc" style="left:627px;top:687px;width:63px;height:44px;">0</div>
<div class="bc" style="left:747px;top:687px;width:46px;height:44px;">0</div>
<div style="position:absolute;left:68px;top:699px;width:67px;height:20px;background:#fff;box-sizing:border-box;border:1px solid #35c3c3;border-top-color:#fff;"></div>
<div style="position:absolute;left:71.0px;top:703px;white-space:nowrap;font-size:11px;line-height:12px;">1</div>
<div style="position:absolute;left:77.6px;top:703px;white-space:nowrap;font-size:11px;line-height:12px;">4</div>
<div style="position:absolute;left:93.3px;top:703px;white-space:nowrap;font-size:11px;line-height:12px;">2</div>
<div style="position:absolute;left:99.5px;top:703px;white-space:nowrap;font-size:11px;line-height:12px;">4</div>
<svg style="position:absolute;left:87px;top:707px" width="3" height="8" viewBox="0 0 3 8"><rect x="0.6" y="0.5" width="1.8" height="1.8" fill="#222"/><rect x="0.6" y="4.4" width="1.8" height="1.8" fill="#222"/></svg>
<svg style="position:absolute;left:119px;top:704px" width="11" height="11" viewBox="0 0 11 11"><circle cx="5.5" cy="5.5" r="4.3" fill="none" stroke="#222" stroke-width="1.1"/><path d="M5.2 3V5.9H7.6" fill="none" stroke="#222" stroke-width="1"/></svg>
<div style="position:absolute;left:859px;top:698px;width:339px;height:22px;background:#fff;box-sizing:border-box;border:1px solid #35c3c3;border-top-color:#fff;"></div>
<div style="position:absolute;left:63px;top:731px;width:1139px;height:44px;background:#b6ddf6;"></div>
<div style="position:absolute;left:139px;top:731px;width:1px;height:44px;background:#d7eefa;"></div>
<div style="position:absolute;left:186px;top:731px;width:1px;height:44px;background:#d7eefa;"></div>
<div style="position:absolute;left:237px;top:731px;width:1px;height:44px;background:#d7eefa;"></div>
<div style="position:absolute;left:311px;top:731px;width:1px;height:44px;background:#d7eefa;"></div>
<div style="position:absolute;left:580px;top:731px;width:1px;height:44px;background:#d7eefa;"></div>
<div style="position:absolute;left:626px;top:731px;width:1px;height:44px;background:#d7eefa;"></div>
<div style="position:absolute;left:690px;top:731px;width:1px;height:44px;background:#d7eefa;"></div>
<div style="position:absolute;left:746px;top:731px;width:1px;height:44px;background:#d7eefa;"></div>
<div style="position:absolute;left:793px;top:731px;width:1px;height:44px;background:#d7eefa;"></div>
<div style="position:absolute;left:854px;top:731px;width:1px;height:44px;background:#d7eefa;"></div>
<div class="bc" style="left:140px;top:731px;width:46px;height:44px;">CE</div>
<div class="bc" style="left:187px;top:731px;width:50px;height:44px;">MEDQX</div>
<div class="bc" style="left:238px;top:731px;width:73px;height:44px;">1102</div>
<div class="bc" style="left:312px;top:731px;width:268px;height:44px;">CLORURO DE SODIO AL 0.9% USP 100 ML 2008<br>M-001117 R3 (BAXTER INTERNATIONAL INC.)<br>(ATC B05CB01) 100 SOLUCION INYECTABLE</div>
<div class="bc" style="left:581px;top:731px;width:45px;height:44px;">1</div>
<div class="bc" style="left:627px;top:731px;width:63px;height:44px;">1</div>
<div class="bc" style="left:747px;top:731px;width:46px;height:44px;">1</div>
<div style="position:absolute;left:68px;top:743px;width:67px;height:20px;background:#fff;box-sizing:border-box;border:1px solid #35c3c3;border-top-color:#fff;"></div>
<div style="position:absolute;left:71.0px;top:747px;white-space:nowrap;font-size:11px;line-height:12px;">1</div>
<div style="position:absolute;left:77.6px;top:747px;white-space:nowrap;font-size:11px;line-height:12px;">4</div>
<div style="position:absolute;left:93.3px;top:747px;white-space:nowrap;font-size:11px;line-height:12px;">2</div>
<div style="position:absolute;left:99.5px;top:747px;white-space:nowrap;font-size:11px;line-height:12px;">4</div>
<svg style="position:absolute;left:87px;top:751px" width="3" height="8" viewBox="0 0 3 8"><rect x="0.6" y="0.5" width="1.8" height="1.8" fill="#222"/><rect x="0.6" y="4.4" width="1.8" height="1.8" fill="#222"/></svg>
<svg style="position:absolute;left:119px;top:748px" width="11" height="11" viewBox="0 0 11 11"><circle cx="5.5" cy="5.5" r="4.3" fill="none" stroke="#222" stroke-width="1.1"/><path d="M5.2 3V5.9H7.6" fill="none" stroke="#222" stroke-width="1"/></svg>
<div style="position:absolute;left:798px;top:742px;width:52px;height:22px;background:#fff;box-sizing:border-box;border:1px solid #35c3c3;border-top-color:#fff;"></div>
<div style="position:absolute;left:801px;top:747px;white-space:nowrap;font-size:11px;line-height:12px;">0</div>
<div style="position:absolute;left:859px;top:742px;width:339px;height:22px;background:#fff;box-sizing:border-box;border:1px solid #35c3c3;border-top-color:#fff;"></div>
<div style="position:absolute;left:63px;top:775px;width:1139px;height:44px;background:#d5ecf9;"></div>
<div style="position:absolute;left:139px;top:775px;width:1px;height:44px;background:#d7eefa;"></div>
<div style="position:absolute;left:186px;top:775px;width:1px;height:44px;background:#d7eefa;"></div>
<div style="position:absolute;left:237px;top:775px;width:1px;height:44px;background:#d7eefa;"></div>
<div style="position:absolute;left:311px;top:775px;width:1px;height:44px;background:#d7eefa;"></div>
<div style="position:absolute;left:580px;top:775px;width:1px;height:44px;background:#d7eefa;"></div>
<div style="position:absolute;left:626px;top:775px;width:1px;height:44px;background:#d7eefa;"></div>
<div style="position:absolute;left:690px;top:775px;width:1px;height:44px;background:#d7eefa;"></div>
<div style="position:absolute;left:746px;top:775px;width:1px;height:44px;background:#d7eefa;"></div>
<div style="position:absolute;left:793px;top:775px;width:1px;height:44px;background:#d7eefa;"></div>
<div style="position:absolute;left:854px;top:775px;width:1px;height:44px;background:#d7eefa;"></div>
<div class="bc" style="left:140px;top:775px;width:46px;height:44px;">CE</div>
<div class="bc" style="left:187px;top:775px;width:50px;height:44px;">MEDQX</div>
<div class="bc" style="left:238px;top:775px;width:73px;height:44px;">1104</div>
<div class="bc" style="left:312px;top:775px;width:268px;height:44px;">CLORURO DE SODIO AL 0.9% USP 500 ML 2008<br>M-001117-R3 (BAXTER INTERNATIONAL INC.)<br>(ATC B05CB01) 500 SOLUCION INYECTABLE</div>
<div class="bc" style="left:581px;top:775px;width:45px;height:44px;">3</div>
<div class="bc" style="left:627px;top:775px;width:63px;height:44px;">3</div>
<div class="bc" style="left:747px;top:775px;width:46px;height:44px;">3</div>
<div style="position:absolute;left:68px;top:787px;width:67px;height:20px;background:#fff;box-sizing:border-box;border:1px solid #35c3c3;border-top-color:#fff;"></div>
<div style="position:absolute;left:71.0px;top:791px;white-space:nowrap;font-size:11px;line-height:12px;">1</div>
<div style="position:absolute;left:77.6px;top:791px;white-space:nowrap;font-size:11px;line-height:12px;">4</div>
<div style="position:absolute;left:93.3px;top:791px;white-space:nowrap;font-size:11px;line-height:12px;">2</div>
<div style="position:absolute;left:99.5px;top:791px;white-space:nowrap;font-size:11px;line-height:12px;">4</div>
<svg style="position:absolute;left:87px;top:795px" width="3" height="8" viewBox="0 0 3 8"><rect x="0.6" y="0.5" width="1.8" height="1.8" fill="#222"/><rect x="0.6" y="4.4" width="1.8" height="1.8" fill="#222"/></svg>
<svg style="position:absolute;left:119px;top:792px" width="11" height="11" viewBox="0 0 11 11"><circle cx="5.5" cy="5.5" r="4.3" fill="none" stroke="#222" stroke-width="1.1"/><path d="M5.2 3V5.9H7.6" fill="none" stroke="#222" stroke-width="1"/></svg>
<div style="position:absolute;left:798px;top:786px;width:52px;height:22px;background:#fff;box-sizing:border-box;border:1px solid #35c3c3;border-top-color:#fff;"></div>
<div style="position:absolute;left:801px;top:791px;white-space:nowrap;font-size:11px;line-height:12px;">0</div>
<div style="position:absolute;left:859px;top:786px;width:339px;height:22px;background:#fff;box-sizing:border-box;border:1px solid #35c3c3;border-top-color:#fff;"></div>
<div style="position:absolute;left:63px;top:819px;width:1139px;height:44px;background:#b6ddf6;"></div>
<div style="position:absolute;left:139px;top:819px;width:1px;height:44px;background:#d7eefa;"></div>
<div style="position:absolute;left:186px;top:819px;width:1px;height:44px;background:#d7eefa;"></div>
<div style="position:absolute;left:237px;top:819px;width:1px;height:44px;background:#d7eefa;"></div>
<div style="position:absolute;left:311px;top:819px;width:1px;height:44px;background:#d7eefa;"></div>
<div style="position:absolute;left:580px;top:819px;width:1px;height:44px;background:#d7eefa;"></div>
<div style="position:absolute;left:626px;top:819px;width:1px;height:44px;background:#d7eefa;"></div>
<div style="position:absolute;left:690px;top:819px;width:1px;height:44px;background:#d7eefa;"></div>
<div style="position:absolute;left:746px;top:819px;width:1px;height:44px;background:#d7eefa;"></div>
<div style="position:absolute;left:793px;top:819px;width:1px;height:44px;background:#d7eefa;"></div>
<div style="position:absolute;left:854px;top:819px;width:1px;height:44px;background:#d7eefa;"></div>
<div class="bc" style="left:140px;top:819px;width:46px;height:44px;">CE</div>
<div class="bc" style="left:187px;top:819px;width:50px;height:44px;">MEDQX</div>
<div class="bc" style="left:238px;top:819px;width:73px;height:44px;">1057</div>
<div class="bc" style="left:312px;top:819px;width:268px;height:44px;">DEXAMETASONA FOSFATO 8MG/2ML-2017M-<br>0012145-R1 (VITALIS) (ATC H02AB02) 8.00000<br>SOLUCIONES</div>
<div class="bc" style="left:581px;top:819px;width:45px;height:44px;">2</div>
<div class="bc" style="left:627px;top:819px;width:63px;height:44px;">2</div>
<div class="bc" style="left:747px;top:819px;width:46px;height:44px;">2</div>
<div style="position:absolute;left:68px;top:831px;width:67px;height:20px;background:#fff;box-sizing:border-box;border:1px solid #35c3c3;border-top-color:#fff;"></div>
<div style="position:absolute;left:71.0px;top:835px;white-space:nowrap;font-size:11px;line-height:12px;">1</div>
<div style="position:absolute;left:77.6px;top:835px;white-space:nowrap;font-size:11px;line-height:12px;">4</div>
<div style="position:absolute;left:93.3px;top:835px;white-space:nowrap;font-size:11px;line-height:12px;">2</div>
<div style="position:absolute;left:99.5px;top:835px;white-space:nowrap;font-size:11px;line-height:12px;">4</div>
<svg style="position:absolute;left:87px;top:839px" width="3" height="8" viewBox="0 0 3 8"><rect x="0.6" y="0.5" width="1.8" height="1.8" fill="#222"/><rect x="0.6" y="4.4" width="1.8" height="1.8" fill="#222"/></svg>
<svg style="position:absolute;left:119px;top:836px" width="11" height="11" viewBox="0 0 11 11"><circle cx="5.5" cy="5.5" r="4.3" fill="none" stroke="#222" stroke-width="1.1"/><path d="M5.2 3V5.9H7.6" fill="none" stroke="#222" stroke-width="1"/></svg>
<div style="position:absolute;left:798px;top:830px;width:52px;height:22px;background:#fff;box-sizing:border-box;border:1px solid #35c3c3;border-top-color:#fff;"></div>
<div style="position:absolute;left:801px;top:835px;white-space:nowrap;font-size:11px;line-height:12px;">0</div>
<div style="position:absolute;left:859px;top:830px;width:339px;height:22px;background:#fff;box-sizing:border-box;border:1px solid #35c3c3;border-top-color:#fff;"></div>
<div style="position:absolute;left:63px;top:863px;width:1139px;height:44px;background:#d5ecf9;"></div>
<div style="position:absolute;left:139px;top:863px;width:1px;height:44px;background:#d7eefa;"></div>
<div style="position:absolute;left:186px;top:863px;width:1px;height:44px;background:#d7eefa;"></div>
<div style="position:absolute;left:237px;top:863px;width:1px;height:44px;background:#d7eefa;"></div>
<div style="position:absolute;left:311px;top:863px;width:1px;height:44px;background:#d7eefa;"></div>
<div style="position:absolute;left:580px;top:863px;width:1px;height:44px;background:#d7eefa;"></div>
<div style="position:absolute;left:626px;top:863px;width:1px;height:44px;background:#d7eefa;"></div>
<div style="position:absolute;left:690px;top:863px;width:1px;height:44px;background:#d7eefa;"></div>
<div style="position:absolute;left:746px;top:863px;width:1px;height:44px;background:#d7eefa;"></div>
<div style="position:absolute;left:793px;top:863px;width:1px;height:44px;background:#d7eefa;"></div>
<div style="position:absolute;left:854px;top:863px;width:1px;height:44px;background:#d7eefa;"></div>
<div class="bc" style="left:140px;top:863px;width:46px;height:44px;">CE</div>
<div class="bc" style="left:187px;top:863px;width:50px;height:44px;">MEDQX</div>
<div class="bc" style="left:238px;top:863px;width:73px;height:44px;">1121</div>
<div class="bc" style="left:312px;top:863px;width:268px;height:44px;">DEXTROSA 5% (FRASCO) 500ML-INVIMA 2019M-<br>0007579-R1 (PISA) (ATC B05CX01) .05000 SH -<br>SOLUCIONES</div>
<div class="bc" style="left:581px;top:863px;width:45px;height:44px;">1</div>
<div class="bc" style="left:627px;top:863px;width:63px;height:44px;">1</div>
<div class="bc" style="left:747px;top:863px;width:46px;height:44px;">1</div>
<div style="position:absolute;left:68px;top:875px;width:67px;height:20px;background:#fff;box-sizing:border-box;border:1px solid #35c3c3;border-top-color:#fff;"></div>
<div style="position:absolute;left:71.0px;top:879px;white-space:nowrap;font-size:11px;line-height:12px;">1</div>
<div style="position:absolute;left:77.6px;top:879px;white-space:nowrap;font-size:11px;line-height:12px;">4</div>
<div style="position:absolute;left:93.3px;top:879px;white-space:nowrap;font-size:11px;line-height:12px;">2</div>
<div style="position:absolute;left:99.5px;top:879px;white-space:nowrap;font-size:11px;line-height:12px;">4</div>
<svg style="position:absolute;left:87px;top:883px" width="3" height="8" viewBox="0 0 3 8"><rect x="0.6" y="0.5" width="1.8" height="1.8" fill="#222"/><rect x="0.6" y="4.4" width="1.8" height="1.8" fill="#222"/></svg>
<svg style="position:absolute;left:119px;top:880px" width="11" height="11" viewBox="0 0 11 11"><circle cx="5.5" cy="5.5" r="4.3" fill="none" stroke="#222" stroke-width="1.1"/><path d="M5.2 3V5.9H7.6" fill="none" stroke="#222" stroke-width="1"/></svg>
<div style="position:absolute;left:798px;top:874px;width:52px;height:22px;background:#fff;box-sizing:border-box;border:1px solid #35c3c3;border-top-color:#fff;"></div>
<div style="position:absolute;left:801px;top:879px;white-space:nowrap;font-size:11px;line-height:12px;">0</div>
<div style="position:absolute;left:859px;top:874px;width:339px;height:22px;background:#fff;box-sizing:border-box;border:1px solid #35c3c3;border-top-color:#fff;"></div>
<div style="position:absolute;left:63px;top:907px;width:1139px;height:32px;background:#b6ddf6;"></div>
<div style="position:absolute;left:139px;top:907px;width:1px;height:32px;background:#d7eefa;"></div>
<div style="position:absolute;left:186px;top:907px;width:1px;height:32px;background:#d7eefa;"></div>
<div style="position:absolute;left:237px;top:907px;width:1px;height:32px;background:#d7eefa;"></div>
<div style="position:absolute;left:311px;top:907px;width:1px;height:32px;background:#d7eefa;"></div>
<div style="position:absolute;left:580px;top:907px;width:1px;height:32px;background:#d7eefa;"></div>
<div style="position:absolute;left:626px;top:907px;width:1px;height:32px;background:#d7eefa;"></div>
<div style="position:absolute;left:690px;top:907px;width:1px;height:32px;background:#d7eefa;"></div>
<div style="position:absolute;left:746px;top:907px;width:1px;height:32px;background:#d7eefa;"></div>
<div style="position:absolute;left:793px;top:907px;width:1px;height:32px;background:#d7eefa;"></div>
<div style="position:absolute;left:854px;top:907px;width:1px;height:32px;background:#d7eefa;"></div>
<div class="bc" style="left:140px;top:907px;width:46px;height:32px;">CE</div>
<div class="bc" style="left:187px;top:907px;width:50px;height:32px;">MEDQX</div>
<div class="bc" style="left:238px;top:907px;width:73px;height:32px;">386</div>
<div class="bc" style="left:312px;top:907px;width:268px;height:32px;">EQUIPO PARA ADMINISTRACION DE<br>SOLUCIONES (BOMBA INFUSION) (ATC UND)</div>
<div class="bc" style="left:581px;top:907px;width:45px;height:32px;">1</div>
<div class="bc" style="left:627px;top:907px;width:63px;height:32px;">1</div>
<div class="bc" style="left:747px;top:907px;width:46px;height:32px;">1</div>
<div style="position:absolute;left:68px;top:913px;width:67px;height:20px;background:#fff;box-sizing:border-box;border:1px solid #35c3c3;border-top-color:#fff;"></div>
<div style="position:absolute;left:71.0px;top:917px;white-space:nowrap;font-size:11px;line-height:12px;">1</div>
<div style="position:absolute;left:77.6px;top:917px;white-space:nowrap;font-size:11px;line-height:12px;">4</div>
<div style="position:absolute;left:93.3px;top:917px;white-space:nowrap;font-size:11px;line-height:12px;">2</div>
<div style="position:absolute;left:99.5px;top:917px;white-space:nowrap;font-size:11px;line-height:12px;">4</div>
<svg style="position:absolute;left:87px;top:921px" width="3" height="8" viewBox="0 0 3 8"><rect x="0.6" y="0.5" width="1.8" height="1.8" fill="#222"/><rect x="0.6" y="4.4" width="1.8" height="1.8" fill="#222"/></svg>
<svg style="position:absolute;left:119px;top:918px" width="11" height="11" viewBox="0 0 11 11"><circle cx="5.5" cy="5.5" r="4.3" fill="none" stroke="#222" stroke-width="1.1"/><path d="M5.2 3V5.9H7.6" fill="none" stroke="#222" stroke-width="1"/></svg>
<div style="position:absolute;left:798px;top:912px;width:52px;height:22px;background:#fff;box-sizing:border-box;border:1px solid #35c3c3;border-top-color:#fff;"></div>
<div style="position:absolute;left:801px;top:917px;white-space:nowrap;font-size:11px;line-height:12px;">0</div>
<div style="position:absolute;left:859px;top:912px;width:339px;height:22px;background:#fff;box-sizing:border-box;border:1px solid #35c3c3;border-top-color:#fff;"></div>
<div style="position:absolute;left:63px;top:939px;width:1139px;height:44px;background:#d5ecf9;"></div>
<div style="position:absolute;left:139px;top:939px;width:1px;height:44px;background:#d7eefa;"></div>
<div style="position:absolute;left:186px;top:939px;width:1px;height:44px;background:#d7eefa;"></div>
<div style="position:absolute;left:237px;top:939px;width:1px;height:44px;background:#d7eefa;"></div>
<div style="position:absolute;left:311px;top:939px;width:1px;height:44px;background:#d7eefa;"></div>
<div style="position:absolute;left:580px;top:939px;width:1px;height:44px;background:#d7eefa;"></div>
<div style="position:absolute;left:626px;top:939px;width:1px;height:44px;background:#d7eefa;"></div>
<div style="position:absolute;left:690px;top:939px;width:1px;height:44px;background:#d7eefa;"></div>
<div style="position:absolute;left:746px;top:939px;width:1px;height:44px;background:#d7eefa;"></div>
<div style="position:absolute;left:793px;top:939px;width:1px;height:44px;background:#d7eefa;"></div>
<div style="position:absolute;left:854px;top:939px;width:1px;height:44px;background:#d7eefa;"></div>
<div class="bc" style="left:140px;top:939px;width:46px;height:44px;">CE</div>
<div class="bc" style="left:187px;top:939px;width:50px;height:44px;">MEDQX</div>
<div class="bc" style="left:238px;top:939px;width:73px;height:44px;">1117</div>
<div class="bc" style="left:312px;top:939px;width:268px;height:44px;">ESPARADRAPO CUREBAND MICROPOROSO -<br>CINTA ADHESIVA HIPOALERGÉNICA-INVIMA<br>2017DM-0015914 () (ATC )</div>
<div class="bc" style="left:581px;top:939px;width:45px;height:44px;">1</div>
<div class="bc" style="left:627px;top:939px;width:63px;height:44px;">1</div>
<div class="bc" style="left:747px;top:939px;width:46px;height:44px;">1</div>
<div style="position:absolute;left:68px;top:951px;width:67px;height:20px;background:#fff;box-sizing:border-box;border:1px solid #35c3c3;border-top-color:#fff;"></div>
<div style="position:absolute;left:71.0px;top:955px;white-space:nowrap;font-size:11px;line-height:12px;">1</div>
<div style="position:absolute;left:77.6px;top:955px;white-space:nowrap;font-size:11px;line-height:12px;">4</div>
<div style="position:absolute;left:93.3px;top:955px;white-space:nowrap;font-size:11px;line-height:12px;">2</div>
<div style="position:absolute;left:99.5px;top:955px;white-space:nowrap;font-size:11px;line-height:12px;">4</div>
<svg style="position:absolute;left:87px;top:959px" width="3" height="8" viewBox="0 0 3 8"><rect x="0.6" y="0.5" width="1.8" height="1.8" fill="#222"/><rect x="0.6" y="4.4" width="1.8" height="1.8" fill="#222"/></svg>
<svg style="position:absolute;left:119px;top:956px" width="11" height="11" viewBox="0 0 11 11"><circle cx="5.5" cy="5.5" r="4.3" fill="none" stroke="#222" stroke-width="1.1"/><path d="M5.2 3V5.9H7.6" fill="none" stroke="#222" stroke-width="1"/></svg>
<div style="position:absolute;left:798px;top:950px;width:52px;height:22px;background:#fff;box-sizing:border-box;border:1px solid #35c3c3;border-top-color:#fff;"></div>
<div style="position:absolute;left:801px;top:955px;white-space:nowrap;font-size:11px;line-height:12px;">0</div>
<div style="position:absolute;left:859px;top:950px;width:339px;height:22px;background:#fff;box-sizing:border-box;border:1px solid #35c3c3;border-top-color:#fff;"></div>
<div style="position:absolute;left:63px;top:983px;width:1139px;height:3px;background:#b6ddf6;"></div>
<div style="position:absolute;left:139px;top:983px;width:1px;height:3px;background:#d7eefa;"></div>
<div style="position:absolute;left:186px;top:983px;width:1px;height:3px;background:#d7eefa;"></div>
<div style="position:absolute;left:237px;top:983px;width:1px;height:3px;background:#d7eefa;"></div>
<div style="position:absolute;left:311px;top:983px;width:1px;height:3px;background:#d7eefa;"></div>
<div style="position:absolute;left:580px;top:983px;width:1px;height:3px;background:#d7eefa;"></div>
<div style="position:absolute;left:626px;top:983px;width:1px;height:3px;background:#d7eefa;"></div>
<div style="position:absolute;left:690px;top:983px;width:1px;height:3px;background:#d7eefa;"></div>
<div style="position:absolute;left:746px;top:983px;width:1px;height:3px;background:#d7eefa;"></div>
<div style="position:absolute;left:793px;top:983px;width:1px;height:3px;background:#d7eefa;"></div>
<div style="position:absolute;left:854px;top:983px;width:1px;height:3px;background:#d7eefa;"></div>
</body></html>
